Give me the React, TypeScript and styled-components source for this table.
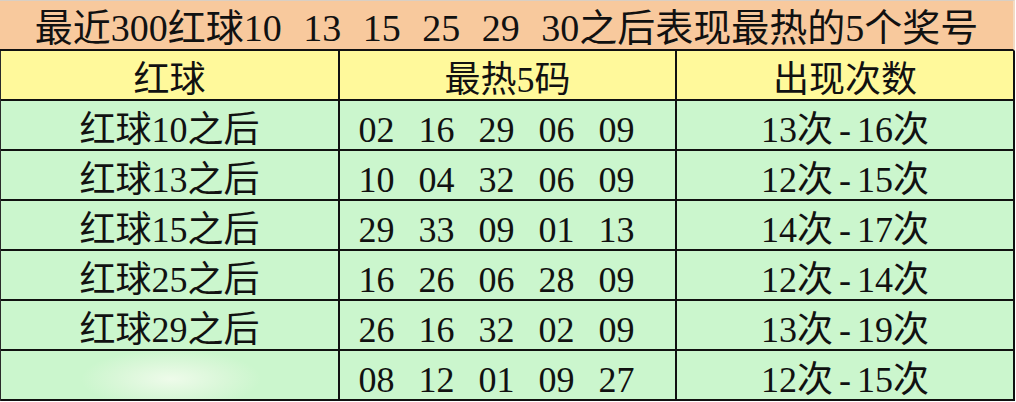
import React from "react";
import styled, { createGlobalStyle } from "styled-components";

const Global = createGlobalStyle`
  html, body { margin: 0; padding: 0; background: #ffffff; }
  body { font-family: "Liberation Serif", "Noto Sans CJK SC", serif; }
`;

const Sheet = styled.div`
  width: 1015px;
  height: 402px;
  background: #ffffff;
  color: #111111;
  font-family: "Liberation Serif", "Noto Sans CJK SC", serif;
`;

const Title = styled.div`
  box-sizing: border-box;
  height: 51px;
  border-top: 1px solid #d9cfc4;
  border-bottom: 2px solid #111111;
  border-right: 2px solid #f3dcc4;
  background: #f8c99d;
  display: flex;
  align-items: center;
  justify-content: center;
  padding-top: 6px;
  font-size: 38px;
  line-height: 1;
  word-spacing: 12px;
  white-space: pre;
`;

const Grid = styled.div`
  display: grid;
  grid-template-columns: 339px 337px 338px;
  grid-auto-rows: 50px;
  border-left: 1px solid #2a2a2a;
`;

const Cell = styled.div<{ $head?: boolean; $blank?: boolean }>`
  box-sizing: border-box;
  border-right: 2px solid #111111;
  border-bottom: 2px solid #111111;
  background: ${(p) =>
    p.$head
      ? "#fff99b"
      : p.$blank
      ? "radial-gradient(ellipse 90px 30px at 170px 28px, #eefbea 0%, #d9f7d8 60%, #cbf6cd 100%)"
      : "#cbf6cd"};
  display: flex;
  align-items: center;
  justify-content: center;
  padding-top: 10px;
  font-size: 36px;
  line-height: 1;
  white-space: pre;
`;

const Numbers = styled(Cell)`
  word-spacing: 15px;
  padding-right: 22px;
`;

const Dash = styled.span`
  margin: 0 6px;
`;

const rows = [
  { ball: "红球10之后", hot: "02 16 29 06 09", from: "13", to: "16" },
  { ball: "红球13之后", hot: "10 04 32 06 09", from: "12", to: "15" },
  { ball: "红球15之后", hot: "29 33 09 01 13", from: "14", to: "17" },
  { ball: "红球25之后", hot: "16 26 06 28 09", from: "12", to: "14" },
  { ball: "红球29之后", hot: "26 16 32 02 09", from: "13", to: "19" },
  { ball: "", hot: "08 12 01 09 27", from: "12", to: "15" },
];

export default function App() {
  return (
    <>
      <Global />
      <Sheet>
        <Title>最近300红球10 13 15 25 29 30之后表现最热的5个奖号</Title>
        <Grid>
          <Cell $head>红球</Cell>
          <Cell $head>最热5码</Cell>
          <Cell $head>出现次数</Cell>
          {rows.map((r, i) => (
            <React.Fragment key={i}>
              <Cell $blank={!r.ball}>{r.ball}</Cell>
              <Numbers>{r.hot}</Numbers>
              <Cell>
                {r.from}次<Dash>-</Dash>
                {r.to}次
              </Cell>
            </React.Fragment>
          ))}
        </Grid>
      </Sheet>
    </>
  );
}
